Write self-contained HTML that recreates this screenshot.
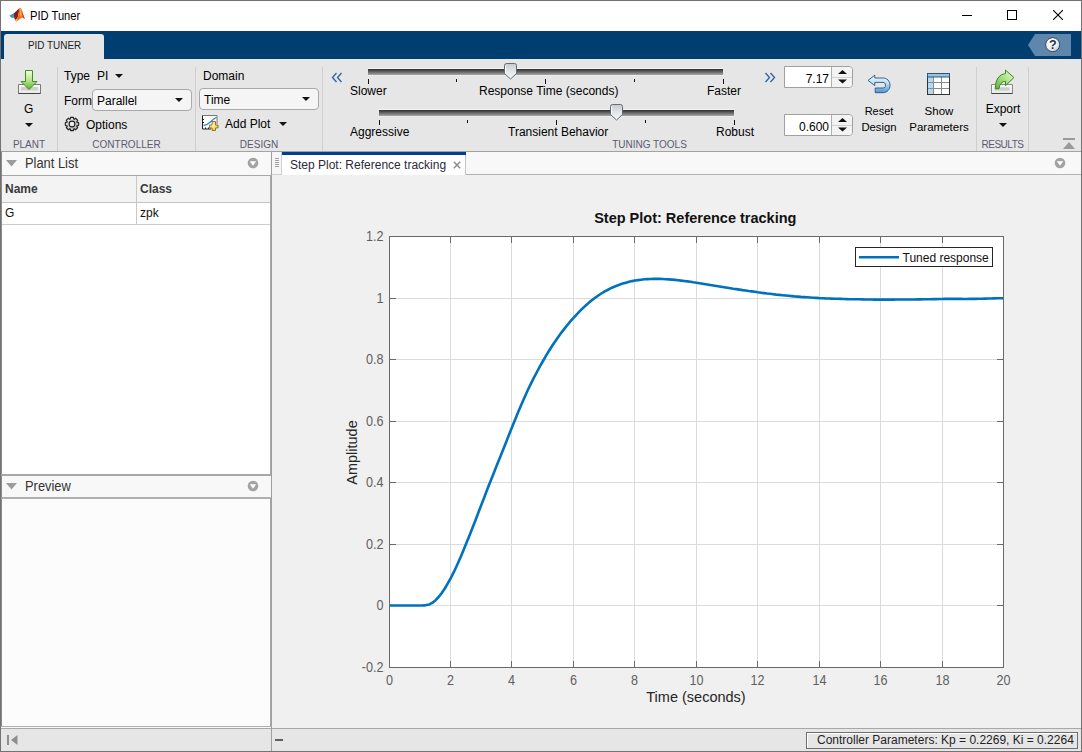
<!DOCTYPE html>
<html><head><meta charset="utf-8">
<style>
*{box-sizing:border-box}
html,body{margin:0;padding:0}
body{width:1082px;height:752px;position:relative;overflow:hidden;background:#f0f0f0;font-family:"Liberation Sans",sans-serif;color:#000}
.a{position:absolute}
.t{position:absolute;white-space:nowrap;line-height:1}
.sep{position:absolute;top:67px;width:1px;height:84px;background:#cfcfcf}
.sl{position:absolute;color:#5b5b6e;font-size:10px;top:139px}
.tick{position:absolute;width:1px;background:#111}
.track{position:absolute;height:6px;background:linear-gradient(#2e2e2e,#4a4a4a 25%,#a8a8a8);box-shadow:0 -1px 0 #f4f4f4,0 1px 0 #ececec}
</style></head><body>
<!-- window border -->
<div class="a" style="left:0;top:0;width:1082px;height:752px;border:1px solid #737373"></div>
<!-- title bar -->
<div class="a" style="left:1px;top:1px;width:1080px;height:30px;background:#fff"></div>
<svg class="a" style="left:6px;top:4px" width="24" height="22" viewBox="0 0 24 22">
<path d="M3.3 11.8 L8.2 9 L12.4 5.2 L10.2 13.2 L6 14 Z" fill="#3d8fd6"/>
<path d="M8 9.4 L12.4 5.2 L13.6 3.8 L12.2 11.5 L10.6 17.4 L8.6 15.2 L8.2 12.5 Z" fill="#8f1a0e"/>
<path d="M13.6 3.8 L15.2 4.6 L17 10 L18.8 15 L16 13.6 L10.6 17.6 L12.2 11.5 Z" fill="#e8702a"/>
<path d="M13.8 4.5 L15 4.8 L15.8 11 L14 12.5 Z" fill="#f2b13b"/>
<path d="M15.2 4.6 L17 10 L18.8 15 L17.3 13.8 L16.2 9.5 Z" fill="#c83a14"/>
<path d="M9 16 L10.8 14.5 L11.8 16.5 L10.6 17.8 Z" fill="#f5c03c"/>
</svg>
<div class="t" style="left:30px;top:10px;font-size:12px;color:#000;transform:scaleX(0.93);transform-origin:0 0">PID Tuner</div>
<!-- window controls -->
<div class="a" style="left:962px;top:15px;width:10px;height:1px;background:#000"></div>
<div class="a" style="left:1007px;top:10px;width:10px;height:10px;border:1px solid #000"></div>
<svg class="a" style="left:1053px;top:10px" width="10" height="10"><path d="M0 0 L10 10 M10 0 L0 10" stroke="#000" stroke-width="1.1"/></svg>
<!-- blue band -->
<div class="a" style="left:1px;top:31px;width:1080px;height:28px;background:#003d70"></div>
<div class="a" style="left:4px;top:34px;width:100px;height:25px;background:#e6e6e6;border-radius:3px 3px 0 0"></div>
<div class="t" style="left:28px;top:40px;font-size:11px;color:#222;transform:scaleX(0.9);transform-origin:0 0">PID TUNER</div>
<svg class="a" style="left:1028px;top:34px" width="44" height="23"><defs><radialGradient id="gH" cx="0.35" cy="0.3" r="0.8"><stop offset="0" stop-color="#ffffff"/><stop offset="0.6" stop-color="#f0f0f0"/><stop offset="1" stop-color="#b8bcc4"/></radialGradient></defs><path d="M7 0 H43 V22 H7 L0 11 Z" fill="#5f87ab"/>
<circle cx="24.7" cy="10.7" r="7" fill="url(#gH)" stroke="#2d3f60" stroke-width="0.9"/>
<text x="24.8" y="15.2" font-family="Liberation Sans" font-weight="bold" font-size="12.5" text-anchor="middle" fill="#24324f">?</text></svg>
<!-- toolstrip -->
<div class="a" style="left:1px;top:59px;width:1080px;height:92px;background:#e6e6e6"></div>
<div class="a" style="left:1px;top:151px;width:1080px;height:1px;background:#a3a3a3"></div>
<div class="sep" style="left:57px"></div>
<div class="sep" style="left:195px"></div>
<div class="sep" style="left:322px"></div>
<div class="sep" style="left:976px"></div>
<div class="sep" style="left:1028px"></div>
<div class="sl" style="left:1px;width:56px;text-align:center">PLANT</div>
<div class="sl" style="left:58px;width:137px;text-align:center">CONTROLLER</div>
<div class="sl" style="left:196px;width:126px;text-align:center">DESIGN</div>
<div class="sl" style="left:323px;width:653px;text-align:center">TUNING TOOLS</div>
<div class="sl" style="left:977px;width:51px;text-align:center;letter-spacing:-0.5px">RESULTS</div>


<!-- PLANT -->
<svg class="a" style="left:17px;top:69px" width="25" height="27" viewBox="0 0 25 27">
<defs><linearGradient id="gA" x1="0" y1="0" x2="0" y2="1"><stop offset="0" stop-color="#f6fcd8"/><stop offset="0.5" stop-color="#b9e58e"/><stop offset="1" stop-color="#5fae35"/></linearGradient>
<linearGradient id="gT" x1="0" y1="0" x2="0" y2="1"><stop offset="0" stop-color="#fafafa"/><stop offset="1" stop-color="#e8e8e8"/></linearGradient></defs>
<path d="M1.5 15.5H23.5V24.5H1.5Z" fill="url(#gT)" stroke="#7a7a7a"/>
<path d="M1.5 24.5H23.5" stroke="#444" stroke-width="1"/>
<rect x="4" y="18" width="17" height="3.5" fill="#cfcfcf"/>
<path d="M8.5 1.5H15.5V12.5H20L12 20.5L4 12.5H8.5Z" fill="url(#gA)" stroke="#3f8f25" stroke-width="1"/>
</svg>
<div class="t" style="left:24px;top:103px;font-size:12px">G</div>
<svg class="a" style="left:25px;top:123px" width="8" height="4"><path d="M0 0H8L4 4Z" fill="#111"/></svg>

<!-- CONTROLLER -->
<div class="t" style="left:64px;top:70px;font-size:12px">Type</div>
<div class="t" style="left:97px;top:70px;font-size:12px">PI</div>
<svg class="a" style="left:115px;top:74px" width="8" height="4"><path d="M0 0H8L4 4Z" fill="#111"/></svg>
<div class="t" style="left:64px;top:95px;font-size:12px">Form</div>
<div class="a" style="left:92px;top:89px;width:100px;height:22px;background:#f5f5f5;border:1px solid #a9a9a9;border-radius:4px"></div>
<div class="t" style="left:97px;top:95px;font-size:12px">Parallel</div>
<svg class="a" style="left:175px;top:98px" width="8" height="4"><path d="M0 0H8L4 4Z" fill="#111"/></svg>
<svg class="a" style="left:64px;top:116px" width="16" height="16" viewBox="0 0 16 16">
<defs><linearGradient id="gG" x1="0" y1="0" x2="1" y2="1"><stop offset="0" stop-color="#f4f4f4"/><stop offset="1" stop-color="#a8a8a8"/></linearGradient></defs>
<path d="M12.87 6.17 L14.64 6.52 L14.64 9.48 L12.87 9.83 L12.74 10.15 L13.74 11.64 L11.64 13.74 L10.15 12.74 L9.83 12.87 L9.48 14.64 L6.52 14.64 L6.17 12.87 L5.85 12.74 L4.36 13.74 L2.26 11.64 L3.26 10.15 L3.13 9.83 L1.36 9.48 L1.36 6.52 L3.13 6.17 L3.26 5.85 L2.26 4.36 L4.36 2.26 L5.85 3.26 L6.17 3.13 L6.52 1.36 L9.48 1.36 L9.83 3.13 L10.15 3.26 L11.64 2.26 L13.74 4.36 L12.74 5.85Z" fill="url(#gG)" stroke="#1e1e1e" stroke-width="1.1" stroke-linejoin="round"/>
<circle cx="8" cy="8" r="2.9" fill="#ececec" stroke="#1e1e1e" stroke-width="1.1"/>
</svg>
<div class="t" style="left:86px;top:119px;font-size:12px">Options</div>

<!-- DESIGN -->
<div class="t" style="left:203px;top:70px;font-size:12px">Domain</div>
<div class="a" style="left:199px;top:88px;width:120px;height:22px;background:#f5f5f5;border:1px solid #a9a9a9;border-radius:4px"></div>
<div class="t" style="left:204px;top:94px;font-size:12px">Time</div>
<svg class="a" style="left:302px;top:97px" width="8" height="4"><path d="M0 0H8L4 4Z" fill="#111"/></svg>
<svg class="a" style="left:201px;top:114px" width="18" height="17" viewBox="0 0 18 17">
<defs><radialGradient id="gP" cx="0.4" cy="0.4" r="0.7"><stop offset="0" stop-color="#fff8c8"/><stop offset="1" stop-color="#e8b830"/></radialGradient></defs>
<rect x="1.5" y="1.5" width="14.5" height="13.5" fill="#fff"/>
<path d="M1.5 15V1.5H16V10" stroke="#777" stroke-width="1" fill="none"/>
<path d="M1.5 1.5V15H10 M1.5 5.5H3 M1.5 8.5H3 M4.5 15V13.5 M7.5 15V13.5" stroke="#222" stroke-width="1" fill="none"/>
<path d="M2.5 11.5 C6 11 8 9.5 10 7.5 C12 5.5 13.5 4 15.5 3.3" stroke="#3a86d0" stroke-width="1.4" fill="none"/>
<path d="M10.8 8.3H14.2V11.8H16.7V14.8H14.2V17.3H10.8V14.8H8.3V11.8H10.8Z" transform="translate(0.3,-0.8)" fill="url(#gP)" stroke="#8a6a12" stroke-width="0.9"/>
</svg>
<div class="t" style="left:225px;top:118px;font-size:12px">Add Plot</div>
<svg class="a" style="left:279px;top:122px" width="8" height="4"><path d="M0 0H8L4 4Z" fill="#111"/></svg>

<!-- TUNING TOOLS -->
<svg class="a" style="left:331px;top:72px" width="12" height="11"><path d="M5.5 1L1.5 5.5L5.5 10 M10.5 1L6.5 5.5L10.5 10" stroke="#2f66a6" stroke-width="1.35" fill="none"/></svg>
<svg class="a" style="left:764px;top:72px" width="12" height="11"><path d="M1.5 1L5.5 5.5L1.5 10 M6.5 1L10.5 5.5L6.5 10" stroke="#2f66a6" stroke-width="1.35" fill="none"/></svg>
<div class="track" style="left:368px;top:69px;width:355px"></div>
<div class="tick" style="left:368px;top:79px;height:5px"></div>
<div class="tick" style="left:456px;top:79px;height:3px"></div>
<div class="tick" style="left:545px;top:79px;height:5px"></div>
<div class="tick" style="left:634px;top:79px;height:3px"></div>
<div class="tick" style="left:723px;top:79px;height:5px"></div>
<svg class="a" style="left:503px;top:62px" width="15" height="18" viewBox="0 0 15 18"><defs><linearGradient id="gS" x1="0" y1="0" x2="0" y2="1"><stop offset="0" stop-color="#c9cccf"/><stop offset="0.6" stop-color="#e8e9ea"/><stop offset="1" stop-color="#f8f8f8"/></linearGradient></defs><path d="M1.5 3.5 Q1.5 1.5 3.5 1.5H11.5Q13.5 1.5 13.5 3.5V11.5L7.5 17L1.5 11.5Z" fill="url(#gS)" stroke="#5f6d78"/><path d="M2.6 3.5V11" stroke="#fff" stroke-width="1"/></svg>
<div class="t" style="left:350px;top:85px;font-size:12px">Slower</div>
<div class="t" style="left:479px;top:85px;font-size:12px">Response Time (seconds)</div>
<div class="t" style="left:707px;top:85px;font-size:12px">Faster</div>
<div class="track" style="left:379px;top:110px;width:355px"></div>
<div class="tick" style="left:379px;top:120px;height:5px"></div>
<div class="tick" style="left:467px;top:120px;height:3px"></div>
<div class="tick" style="left:556px;top:120px;height:5px"></div>
<div class="tick" style="left:645px;top:120px;height:3px"></div>
<div class="tick" style="left:734px;top:120px;height:5px"></div>
<svg class="a" style="left:609px;top:103px" width="15" height="18" viewBox="0 0 15 18"><path d="M1.5 3.5 Q1.5 1.5 3.5 1.5H11.5Q13.5 1.5 13.5 3.5V11.5L7.5 17L1.5 11.5Z" fill="url(#gS)" stroke="#5f6d78"/><path d="M2.6 3.5V11" stroke="#fff" stroke-width="1"/></svg>
<div class="t" style="left:350px;top:126px;font-size:12px">Aggressive</div>
<div class="t" style="left:508px;top:126px;font-size:12px">Transient Behavior</div>
<div class="t" style="left:716px;top:126px;font-size:12px">Robust</div>

<!-- spinners -->
<div class="a" style="left:784px;top:66px;width:69px;height:22px;background:#fff;border:1px solid #a0a0a0;border-radius:0 4px 4px 0"></div>
<div class="a" style="left:831px;top:67px;width:21px;height:20px;background:#f3f3f3;border-left:1px solid #b0b0b0;border-radius:0 3px 3px 0"></div>
<div class="a" style="left:832px;top:77px;width:20px;height:1px;background:#d0d0d0"></div>
<svg class="a" style="left:838px;top:70px" width="9" height="14"><path d="M0 4H9L4.5 0Z M0 9.5H9L4.5 13.5Z" fill="#111"/></svg>
<div class="t" style="left:791px;top:73px;width:38px;text-align:right;font-size:12px">7.17</div>
<div class="a" style="left:784px;top:114px;width:69px;height:22px;background:#fff;border:1px solid #a0a0a0;border-radius:0 4px 4px 0"></div>
<div class="a" style="left:831px;top:115px;width:21px;height:20px;background:#f3f3f3;border-left:1px solid #b0b0b0;border-radius:0 3px 3px 0"></div>
<div class="a" style="left:832px;top:125px;width:20px;height:1px;background:#d0d0d0"></div>
<svg class="a" style="left:838px;top:118px" width="9" height="14"><path d="M0 4H9L4.5 0Z M0 9.5H9L4.5 13.5Z" fill="#111"/></svg>
<div class="t" style="left:791px;top:121px;width:38px;text-align:right;font-size:12px">0.600</div>

<!-- Reset -->
<svg class="a" style="left:866px;top:73px" width="26" height="22" viewBox="0 0 26 22">
<defs><linearGradient id="gR" x1="0" y1="0" x2="0" y2="1"><stop offset="0" stop-color="#eaf6fe"/><stop offset="0.45" stop-color="#c4e0f6"/><stop offset="1" stop-color="#4f93d2"/></linearGradient></defs>
<path d="M2 7.4 L8.8 2.2 V5 H17 C21 5 24 8 24 12.3 C24 16.5 21 19.7 17 19.7 H9.2 V15 H17 C18.6 15 19.5 13.8 19.5 12.2 C19.5 10.5 18.6 9.4 17 9.4 H8.8 V12.6 Z" fill="url(#gR)" stroke="#245688" stroke-width="0.9" stroke-linejoin="round"/>
</svg>
<div class="t" style="left:850px;top:106px;width:58px;text-align:center;font-size:11px">Reset</div>
<div class="t" style="left:850px;top:122px;width:58px;text-align:center;font-size:11.3px">Design</div>

<!-- Show Parameters -->
<svg class="a" style="left:927px;top:73px" width="23" height="22" viewBox="0 0 23 22">
<rect x="0.5" y="0.5" width="22" height="21" fill="#fff" stroke="#333"/>
<rect x="1" y="4" width="5.5" height="17" fill="#b3daf3"/>
<path d="M6.5 4V21 M14.5 4V21 M1 9.5H22 M1 15.5H22" stroke="#8c8c8c" stroke-width="1"/>
<rect x="0.5" y="0.5" width="22" height="3.5" fill="#9cc2da" stroke="#2a5684"/>
</svg>
<div class="t" style="left:900px;top:106px;width:78px;text-align:center;font-size:11.5px">Show</div>
<div class="t" style="left:900px;top:122px;width:78px;text-align:center;font-size:11.5px">Parameters</div>

<!-- Export -->
<svg class="a" style="left:989px;top:69px" width="28" height="27" viewBox="0 0 28 27">
<defs><linearGradient id="gE" x1="0" y1="1" x2="1" y2="0"><stop offset="0" stop-color="#5fb238"/><stop offset="0.55" stop-color="#b5e38a"/><stop offset="1" stop-color="#f2fbe0"/></linearGradient></defs>
<path d="M2.5 15.5H23.5V24.5H2.5Z" fill="url(#gT)" stroke="#8a8a8a"/>
<path d="M2.5 24.5H23.5" stroke="#444"/>
<rect x="5.5" y="18.3" width="15" height="3.4" fill="#cdcdcd"/>
<path d="M6.3 19.7 C6.3 11 10 5 16.5 4.7 V1.1 L24.9 8.6 L16.5 16.7 V12.4 C13 12.4 10.5 15 10 19.7 Z" fill="url(#gE)" stroke="#2f8a22" stroke-width="1" stroke-linejoin="round"/>
</svg>
<div class="t" style="left:980px;top:103px;width:46px;text-align:center;font-size:12px">Export</div>
<svg class="a" style="left:999px;top:123px" width="8" height="4"><path d="M0 0H8L4 4Z" fill="#111"/></svg>
<svg class="a" style="left:1063px;top:138px" width="12" height="12"><rect x="0" y="0" width="12" height="2" fill="#9a9a9a"/><path d="M0 11H12L6 4Z" fill="#9a9a9a"/></svg>

<!-- left panel -->
<div class="a" style="left:1px;top:152px;width:270px;height:575px;background:#fcfcfc"></div>
<!-- Plant List header -->
<div class="a" style="left:1px;top:152px;width:270px;height:24px;background:#f8f8f8;border-bottom:1px solid #a8a8a8"></div>
<svg class="a" style="left:6px;top:160px" width="11" height="7"><path d="M0 0H11L5.5 6.5Z" fill="#9c9c9c"/></svg>
<div class="t" style="left:25px;top:156px;font-size:14px;color:#333;transform:scaleX(0.92);transform-origin:0 0">Plant List</div>
<svg class="a" style="left:247px;top:157px" width="12" height="12"><circle cx="6" cy="6" r="5.3" fill="#a3a3a3"/><path d="M2.8 4.2H9.2L6 8.8Z" fill="#fff"/></svg>
<!-- table -->
<div class="a" style="left:1px;top:176px;width:270px;height:551px;background:linear-gradient(#fff 0 298px,#fcfcfc 298px);border-left:1px solid #8a8a8a;border-right:1px solid #a6a6a6"></div>
<div class="a" style="left:2px;top:176px;width:268px;height:27px;background:#f3f3f3;border-bottom:1px solid #c4c4c4"></div>
<div class="a" style="left:2px;top:203px;width:268px;height:22px;background:#fff;border-bottom:1px solid #cccccc"></div>
<div class="a" style="left:136px;top:176px;width:1px;height:48px;background:#c8c8c8"></div>
<div class="a" style="left:1px;top:152px;width:1px;height:575px;background:#8a8a8a"></div>
<div class="t" style="left:5px;top:183px;font-size:12px;font-weight:bold;color:#3a3a3a">Name</div>
<div class="t" style="left:140px;top:183px;font-size:12px;font-weight:bold;color:#3a3a3a">Class</div>
<div class="t" style="left:5px;top:207px;font-size:12px;color:#111">G</div>
<div class="t" style="left:140px;top:207px;font-size:12px;color:#111">zpk</div>
<!-- Preview header -->
<div class="a" style="left:1px;top:474px;width:270px;height:2px;background:#a8a8a8"></div>
<div class="a" style="left:1px;top:476px;width:270px;height:23px;background:#f8f8f8;border-bottom:2px solid #b0b0b0;border-left:1px solid #8a8a8a"></div>
<svg class="a" style="left:6px;top:483px" width="11" height="7"><path d="M0 0H11L5.5 6.5Z" fill="#9c9c9c"/></svg>
<div class="t" style="left:25px;top:479px;font-size:14px;color:#333;transform:scaleX(0.92);transform-origin:0 0">Preview</div>
<svg class="a" style="left:247px;top:480px" width="12" height="12"><circle cx="6" cy="6" r="5.3" fill="#a3a3a3"/><path d="M2.8 4.2H9.2L6 8.8Z" fill="#fff"/></svg>
<div class="a" style="left:1px;top:726px;width:270px;height:1px;background:#b0b0b0"></div>
<!-- doc area -->
<div class="a" style="left:271px;top:152px;width:1px;height:599px;background:#a0a0a0"></div>
<div class="a" style="left:272px;top:152px;width:809px;height:23px;background:#f8f8f8;border-bottom:1px solid #b4b4b4"></div>
<div class="a" style="left:272px;top:152px;width:10px;height:23px;background:#f6f6f6;border-right:1px solid #cfcfcf;border-bottom:1px solid #cfcfcf;border-radius:0 0 2px 0"></div>
<div class="a" style="left:275px;top:158px;width:4px;height:9px;background:repeating-linear-gradient(#a0a0a0 0 1px,transparent 1px 2px)"></div>
<div class="a" style="left:282px;top:152px;width:184px;height:23px;background:#fff;border-right:1px solid #c4c4c4"></div>
<div class="a" style="left:282px;top:152px;width:184px;height:3px;background:#00418f"></div>
<div class="t" style="left:290px;top:159px;font-size:12px;color:#2a2a3a">Step Plot: Reference tracking</div>
<svg class="a" style="left:453px;top:161px" width="8" height="8"><path d="M0.8 0.8L7.2 7.2M7.2 0.8L0.8 7.2" stroke="#8c8c8c" stroke-width="1.5"/></svg>
<svg class="a" style="left:1054px;top:157px" width="12" height="12"><circle cx="6" cy="6" r="5.3" fill="#a3a3a3"/><path d="M2.8 4.2H9.2L6 8.8Z" fill="#fff"/></svg>
<!-- status bar -->
<div class="a" style="left:1px;top:728px;width:1080px;height:1px;background:#a8a8a8"></div>
<div class="a" style="left:1px;top:727px;width:270px;height:1px;background:#f8f8f8"></div>
<div class="a" style="left:1px;top:729px;width:1080px;height:22px;background:#e6e6e6"></div>
<div class="a" style="left:271px;top:728px;width:1px;height:23px;background:#a0a0a0"></div>
<svg class="a" style="left:7px;top:735px" width="11" height="10"><rect x="0" y="0" width="2" height="10" fill="#8e8e8e"/><path d="M10.5 0V10L4 5Z" fill="#8e8e8e"/></svg>
<div class="a" style="left:275px;top:739px;width:8px;height:2px;background:#606060"></div>
<div class="a" style="left:806px;top:732px;width:272px;height:17px;border:1px solid #6e6e6e;box-shadow:inset 1px 1px 0 #fff"></div>
<div class="t" style="left:817px;top:734px;font-size:12px;color:#222">Controller Parameters: Kp = 0.2269, Ki = 0.2264</div>

<!-- plot -->
<svg class="a" style="left:0;top:0" width="1082" height="752">
<rect x="389.5" y="236.5" width="614" height="431" fill="#fff"/>
<path d="M450.5 237V667 M511.5 237V667 M573.5 237V667 M634.5 237V667 M696.5 237V667 M757.5 237V667 M819.5 237V667 M880.5 237V667 M942.5 237V667 M390 298.5H1003 M390 359.5H1003 M390 421.5H1003 M390 482.5H1003 M390 544.5H1003 M390 605.5H1003" stroke="#dbdbdb" stroke-width="1" fill="none"/>
<path d="M450.5 667V661 M450.5 237V243 M511.5 667V661 M511.5 237V243 M573.5 667V661 M573.5 237V243 M634.5 667V661 M634.5 237V243 M696.5 667V661 M696.5 237V243 M757.5 667V661 M757.5 237V243 M819.5 667V661 M819.5 237V243 M880.5 667V661 M880.5 237V243 M942.5 667V661 M942.5 237V243 M390 298.5H396 M1003 298.5H997 M390 359.5H396 M1003 359.5H997 M390 421.5H396 M1003 421.5H997 M390 482.5H396 M1003 482.5H997 M390 544.5H396 M1003 544.5H997 M390 605.5H396 M1003 605.5H997" stroke="#6a6a6a" stroke-width="1" fill="none"/>
<path d="M389.5,605.5 392.6,605.5 395.6,605.5 398.7,605.5 401.8,605.5 404.9,605.5 407.9,605.5 411.0,605.5 414.1,605.5 417.1,605.5 420.2,605.5 423.3,605.4 426.3,605.1 429.4,604.4 432.5,602.7 435.6,600.2 438.6,597.0 441.7,593.1 444.8,588.5 447.8,583.4 450.9,577.8 454.0,571.7 457.0,565.2 460.1,558.3 463.2,551.0 466.2,543.6 469.3,535.9 472.4,528.1 475.5,520.2 478.5,512.2 481.6,504.2 484.7,496.3 487.7,488.3 490.8,480.5 493.9,472.7 496.9,465.0 500.0,457.4 503.1,449.7 506.2,442.0 509.2,434.3 512.3,426.6 515.4,419.1 518.4,411.6 521.5,404.3 524.6,397.3 527.6,390.5 530.7,384.1 533.8,377.9 536.9,372.0 539.9,366.4 543.0,361.0 546.1,355.7 549.1,350.7 552.2,345.8 555.3,341.2 558.4,336.8 561.4,332.6 564.5,328.6 567.6,324.8 570.6,321.1 573.7,317.6 576.8,314.3 579.8,311.1 582.9,308.1 586.0,305.3 589.0,302.6 592.1,300.0 595.2,297.7 598.3,295.5 601.3,293.5 604.4,291.6 607.5,290.0 610.5,288.4 613.6,287.0 616.7,285.8 619.8,284.6 622.8,283.6 625.9,282.7 629.0,281.8 632.0,281.1 635.1,280.5 638.2,280.1 641.2,279.7 644.3,279.3 647.4,279.1 650.5,279.0 653.5,278.9 656.6,278.9 659.7,278.9 662.7,279.0 665.8,279.2 668.9,279.4 671.9,279.6 675.0,279.9 678.1,280.2 681.1,280.6 684.2,281.0 687.3,281.4 690.4,281.8 693.4,282.3 696.5,282.7 699.6,283.2 702.6,283.7 705.7,284.2 708.8,284.7 711.8,285.2 714.9,285.7 718.0,286.2 721.1,286.7 724.1,287.2 727.2,287.7 730.3,288.2 733.3,288.7 736.4,289.1 739.5,289.6 742.5,290.1 745.6,290.5 748.7,291.0 751.8,291.4 754.8,291.8 757.9,292.3 761.0,292.7 764.0,293.1 767.1,293.5 770.2,293.8 773.2,294.2 776.3,294.6 779.4,294.9 782.5,295.2 785.5,295.5 788.6,295.8 791.7,296.1 794.7,296.4 797.8,296.6 800.9,296.9 804.0,297.1 807.0,297.3 810.1,297.5 813.2,297.7 816.2,297.9 819.3,298.1 822.4,298.2 825.4,298.4 828.5,298.5 831.6,298.6 834.6,298.7 837.7,298.8 840.8,298.9 843.9,299.0 846.9,299.1 850.0,299.2 853.1,299.2 856.1,299.3 859.2,299.3 862.3,299.4 865.3,299.5 868.4,299.5 871.5,299.5 874.6,299.6 877.6,299.6 880.7,299.6 883.8,299.6 886.8,299.6 889.9,299.6 893.0,299.6 896.0,299.5 899.1,299.5 902.2,299.5 905.3,299.5 908.3,299.5 911.4,299.5 914.5,299.5 917.5,299.4 920.6,299.4 923.7,299.3 926.8,299.3 929.8,299.2 932.9,299.1 936.0,299.1 939.0,299.0 942.1,299.0 945.2,298.9 948.2,298.9 951.3,298.9 954.4,298.9 957.4,298.9 960.5,298.9 963.6,299.0 966.7,299.0 969.7,298.9 972.8,298.9 975.9,298.9 978.9,298.8 982.0,298.7 985.1,298.6 988.1,298.5 991.2,298.5 994.3,298.4 997.4,298.3 1000.4,298.3 1003.5,298.3" fill="none" stroke="#0072bd" stroke-width="2.6" stroke-linejoin="round" stroke-linecap="butt"/>
<rect x="389.5" y="236.5" width="614" height="431" fill="none" stroke="#6a6a6a" stroke-width="1"/>
<g font-family="Liberation Sans" font-size="14" fill="#606060">
<text transform="translate(389.5,685) scale(0.9,1)" text-anchor="middle">0</text>
<text transform="translate(450.5,685) scale(0.9,1)" text-anchor="middle">2</text>
<text transform="translate(511.5,685) scale(0.9,1)" text-anchor="middle">4</text>
<text transform="translate(573.5,685) scale(0.9,1)" text-anchor="middle">6</text>
<text transform="translate(634.5,685) scale(0.9,1)" text-anchor="middle">8</text>
<text transform="translate(696.5,685) scale(0.9,1)" text-anchor="middle">10</text>
<text transform="translate(757.5,685) scale(0.9,1)" text-anchor="middle">12</text>
<text transform="translate(819.5,685) scale(0.9,1)" text-anchor="middle">14</text>
<text transform="translate(880.5,685) scale(0.9,1)" text-anchor="middle">16</text>
<text transform="translate(942.5,685) scale(0.9,1)" text-anchor="middle">18</text>
<text transform="translate(1003.5,685) scale(0.9,1)" text-anchor="middle">20</text>
<text transform="translate(383.5,241.4) scale(0.9,1)" text-anchor="end">1.2</text>
<text transform="translate(383.5,303.0) scale(0.9,1)" text-anchor="end">1</text>
<text transform="translate(383.5,364.4) scale(0.9,1)" text-anchor="end">0.8</text>
<text transform="translate(383.5,425.9) scale(0.9,1)" text-anchor="end">0.6</text>
<text transform="translate(383.5,487.3) scale(0.9,1)" text-anchor="end">0.4</text>
<text transform="translate(383.5,548.7) scale(0.9,1)" text-anchor="end">0.2</text>
<text transform="translate(383.5,610.1) scale(0.9,1)" text-anchor="end">0</text>
<text transform="translate(383.5,671.5) scale(0.9,1)" text-anchor="end">-0.2</text>
</g>
<text x="695.3" y="223.3" text-anchor="middle" font-family="Liberation Sans" font-weight="bold" font-size="14.5" fill="#111">Step Plot: Reference tracking</text>
<text x="696" y="701.6" text-anchor="middle" font-family="Liberation Sans" font-size="14.5" fill="#262626">Time (seconds)</text>
<text transform="translate(357,452.5) rotate(-90)" x="0" y="0" text-anchor="middle" font-family="Liberation Sans" font-size="14.5" fill="#262626">Amplitude</text>
<rect x="855.5" y="247.5" width="137" height="19" fill="#fff" stroke="#262626" stroke-width="1"/>
<path d="M859 257.3H899" stroke="#0072bd" stroke-width="2.6"/>
<text x="902.5" y="262" font-family="Liberation Sans" font-size="12" fill="#111">Tuned response</text>
</svg>
</body></html>
